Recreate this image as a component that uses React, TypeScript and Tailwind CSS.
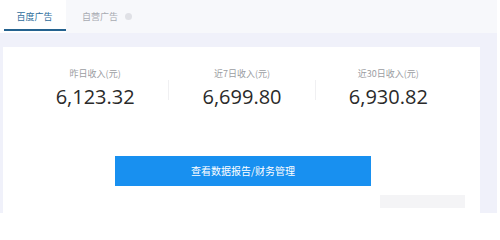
const stats = [
  { label: '昨日收入(元)', value: '6,123.32' },
  { label: '近7日收入(元)', value: '6,699.80' },
  { label: '近30日收入(元)', value: '6,930.82' },
];

const cjk = "font-['Noto_Sans_CJK_SC',sans-serif]";

export default function App() {
  return (
    <div className="relative flex w-[500px] h-[213px] overflow-hidden bg-white">
      <div className="flex flex-col w-[497px] bg-[#f0f1fa]">
        {/* Tabs */}
        <div className="flex h-[33px] bg-[#f7f8fb]">
          <div className="relative flex w-[66px] items-center justify-center bg-white pb-[1px]">
            <span className={`${cjk} text-[9px] leading-none text-[#2f6d9c] pl-[3px]`}>百度广告</span>
            <div className="absolute left-[4px] right-0 bottom-[2px] h-[2px] bg-[#24628f]" />
          </div>
          <div className="flex items-center pl-[16px] gap-[7px]">
            <span className={`${cjk} text-[9px] leading-none text-[#a8abb2]`}>自营广告</span>
            <span className="w-[7px] h-[7px] rounded-full bg-[#e0e1e6]" />
          </div>
        </div>

        {/* Card */}
        <div className="ml-[3px] mt-[14px] w-[477px] flex-1 bg-white px-[19px] pt-[20px]">
          <div className="flex items-start">
            {stats.map((s, i) => (
              <div key={i} className="flex flex-1 items-start">
                {i > 0 && <div className="mt-[13px] h-[20px] w-px bg-[#f0f0f2]" />}
                <div className="flex flex-1 flex-col items-center">
                  <span className={`${cjk} text-[9px] leading-[14px] text-[#9b9da2]`}>{s.label}</span>
                  <span className="mt-[3px] font-['Open_Sans',sans-serif] text-[20px] leading-[26px] text-[#2a2a2a]">
                    {s.value}
                  </span>
                </div>
              </div>
            ))}
          </div>

          <div className="mt-[46px] flex justify-center">
            <div className="flex h-[30px] w-[256px] items-center justify-center bg-[#1890f0] ml-[3px]">
              <span className={`${cjk} text-[10px] leading-none text-white`}>查看数据报告/财务管理</span>
            </div>
          </div>
        </div>
      </div>

      {/* faint watermark */}
      <div className="absolute left-[380px] top-[195px] h-[13px] w-[85px] bg-[#f4f4f6]" />
    </div>
  );
}
